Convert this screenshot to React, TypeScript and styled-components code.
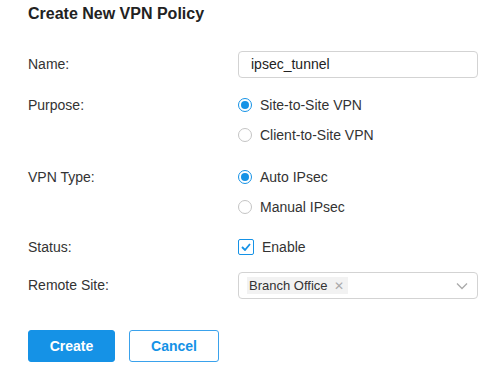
import React from "react";
import styled, { createGlobalStyle } from "styled-components";

const GlobalStyle = createGlobalStyle`
  body {
    margin: 0;
    background: #fff;
    font-family: "Liberation Sans", Arial, sans-serif;
    color: #333;
  }
`;

const Page = styled.div`
  padding: 4px 28px 0;
  width: 498px;
  box-sizing: border-box;
`;

const Title = styled.h1`
  margin: 0 0 27px;
  font-size: 16px;
  line-height: 20px;
  font-weight: 700;
  color: #222;
`;

const Row = styled.div<{ $mb: number }>`
  display: grid;
  grid-template-columns: 210px 240px;
  align-items: start;
  margin-bottom: ${(p) => p.$mb}px;
`;

const Label = styled.div<{ $h: number }>`
  font-size: 14px;
  line-height: ${(p) => p.$h}px;
  color: #333;
`;

const Options = styled.div`
  display: flex;
  flex-direction: column;
  gap: 10px;
`;

const Option = styled.label`
  display: flex;
  align-items: center;
  gap: 8px;
  height: 20px;
  font-size: 14px;
  color: #333;
`;

const Radio = styled.span<{ $on?: boolean }>`
  width: 14px;
  height: 14px;
  border-radius: 50%;
  box-sizing: border-box;
  border: 1px solid ${(p) => (p.$on ? "#1592e6" : "#c4c4c4")};
  display: flex;
  align-items: center;
  justify-content: center;
  &::after {
    content: "";
    width: 8px;
    height: 8px;
    border-radius: 50%;
    background: ${(p) => (p.$on ? "#1592e6" : "transparent")};
  }
`;

const Check = styled.span`
  width: 16px;
  height: 16px;
  box-sizing: border-box;
  border: 1px solid #1592e6;
  border-radius: 2px;
  display: flex;
  align-items: center;
  justify-content: center;
  color: #1592e6;
`;

const Input = styled.div`
  height: 27px;
  box-sizing: border-box;
  border: 1px solid #d3d3d3;
  border-radius: 4px;
  padding: 0 12px;
  font-size: 14px;
  line-height: 25px;
  color: #222;
`;

const Select = styled.div`
  height: 27px;
  box-sizing: border-box;
  border: 1px solid #d3d3d3;
  border-radius: 4px;
  padding: 0 9px 0 8px;
  display: flex;
  align-items: center;
  justify-content: space-between;
`;

const Tag = styled.span`
  display: flex;
  align-items: center;
  gap: 6px;
  height: 17px;
  padding: 0 4px 0 2px;
  background: #f2f2f2;
  font-size: 13px;
  color: #333;
`;

const TagClose = styled.span`
  font-size: 12px;
  color: #aaa;
`;

const Actions = styled.div`
  display: flex;
  gap: 14px;
  margin-top: 31px;
`;

const Button = styled.button<{ $primary?: boolean }>`
  height: 32px;
  width: ${(p) => (p.$primary ? 87 : 90)}px;
  box-sizing: border-box;
  border-radius: 3px;
  border: 1px solid ${(p) => (p.$primary ? "#1592e6" : "#3aa2ec")};
  background: ${(p) => (p.$primary ? "#1592e6" : "#fff")};
  color: ${(p) => (p.$primary ? "#fff" : "#1592e6")};
  font-family: "Liberation Sans", Arial, sans-serif;
  font-size: 14px;
  font-weight: 700;
  padding: 0;
`;

const App = () => {
  return (
    <>
      <GlobalStyle />
      <Page>
        <Title>Create New VPN Policy</Title>
        <Row $mb={17}>
          <Label $h={27}>Name:</Label>
          <Input>ipsec_tunnel</Input>
        </Row>
        <Row $mb={22}>
          <Label $h={20}>Purpose:</Label>
          <Options>
            <Option>
              <Radio $on />
              Site-to-Site VPN
            </Option>
            <Option>
              <Radio />
              Client-to-Site VPN
            </Option>
          </Options>
        </Row>
        <Row $mb={20}>
          <Label $h={20}>VPN Type:</Label>
          <Options>
            <Option>
              <Radio $on />
              Auto IPsec
            </Option>
            <Option>
              <Radio />
              Manual IPsec
            </Option>
          </Options>
        </Row>
        <Row $mb={15}>
          <Label $h={20}>Status:</Label>
          <Option>
            <Check>
              <svg width="10" height="8" viewBox="0 0 10 8">
                <path d="M1 4l3 3 5-6" fill="none" stroke="currentColor" strokeWidth="1.8" />
              </svg>
            </Check>
            Enable
          </Option>
        </Row>
        <Row $mb={0}>
          <Label $h={27}>Remote Site:</Label>
          <Select>
            <Tag>
              Branch Office
              <TagClose>✕</TagClose>
            </Tag>
            <svg width="12" height="8" viewBox="0 0 12 8">
              <path d="M1 1.5l5 5 5-5" fill="none" stroke="#aaa" strokeWidth="1.3" />
            </svg>
          </Select>
        </Row>
        <Actions>
          <Button $primary>Create</Button>
          <Button>Cancel</Button>
        </Actions>
      </Page>
    </>
  );
};

export default App;
